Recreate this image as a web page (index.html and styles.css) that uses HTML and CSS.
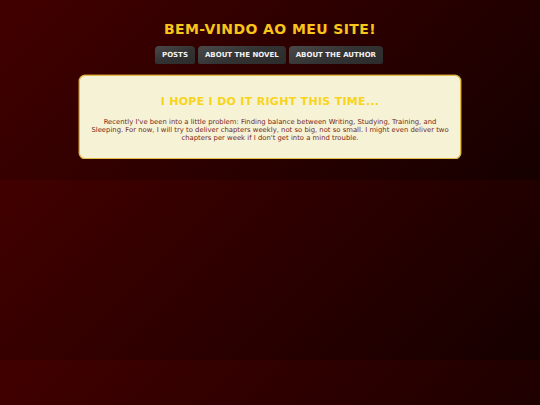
FILE: index.html
```html
<!DOCTYPE html>
<html>
<head>
<meta charset="utf-8">
<title>Bem-vindo</title>
<link rel="stylesheet" href="styles.css">
</head>
<body>
<header class="site-header">
  <h1 class="site-title">BEM-VINDO AO MEU SITE!</h1>
  <nav class="nav">
    <a class="nav-btn" href="#">POSTS</a>
    <a class="nav-btn" href="#">ABOUT THE NOVEL</a>
    <a class="nav-btn" href="#">ABOUT THE AUTHOR</a>
  </nav>
</header>
<main class="content">
  <section class="card">
    <h2 class="card-title">I HOPE I DO IT RIGHT THIS TIME...</h2>
    <p class="card-text">Recently I've been into a little problem: Finding balance between Writing, Studying, Training, and Sleeping. For now, I will try to deliver chapters weekly, not so big, not so small. I might even deliver two chapters per week if I don't get into a mind trouble.</p>
  </section>
</main>
</body>
</html>
```
FILE: styles.css
```css
html {
  background: linear-gradient(135deg, #420000 0%, #160000 100%);
  background-size: 100% 180px;
  background-repeat: repeat;
  min-height: 100%;
}
body {
  margin: 0;
  font-family: "DejaVu Sans", Verdana, sans-serif;
}
.site-header {
  display: flex;
  flex-direction: column;
  align-items: center;
  padding-top: 20px;
}
.site-title {
  margin: 0;
  font-size: 14px;
  line-height: 18px;
  font-weight: bold;
  color: #f8c51a;
  letter-spacing: 0.4px;
}
.nav {
  display: flex;
  gap: 3px;
  margin-top: 8px;
  margin-left: -2px;
}
.nav-btn {
  display: block;
  height: 18px;
  line-height: 18px;
  padding: 0 7px;
  font-size: 7px;
  font-weight: bold;
  color: #f2f2f2;
  text-decoration: none;
  background: linear-gradient(160deg, #4a4a4a 0%, #333333 50%, #2c2c2c 100%);
  border-radius: 4px 4px 2px 2px;
}
.content {
  display: flex;
  justify-content: center;
  padding-top: 11px;
}
.card {
  width: 382px;
  box-sizing: border-box;
  background: #f6f2d6;
  border: 1px solid #e3bb4a;
  border-radius: 6px;
  padding: 19px 11px 16px;
  text-align: center;
  box-shadow: 0 0 0 0.5px #c9962e;
}
.card-title {
  margin: 0 0 9px;
  font-size: 11px;
  line-height: 14px;
  font-weight: bold;
  color: #f8d41c;
  letter-spacing: 0.3px;
}
.card-text {
  margin: 0;
  font-size: 6.85px;
  line-height: 8px;
  color: #74291a;
}
```
